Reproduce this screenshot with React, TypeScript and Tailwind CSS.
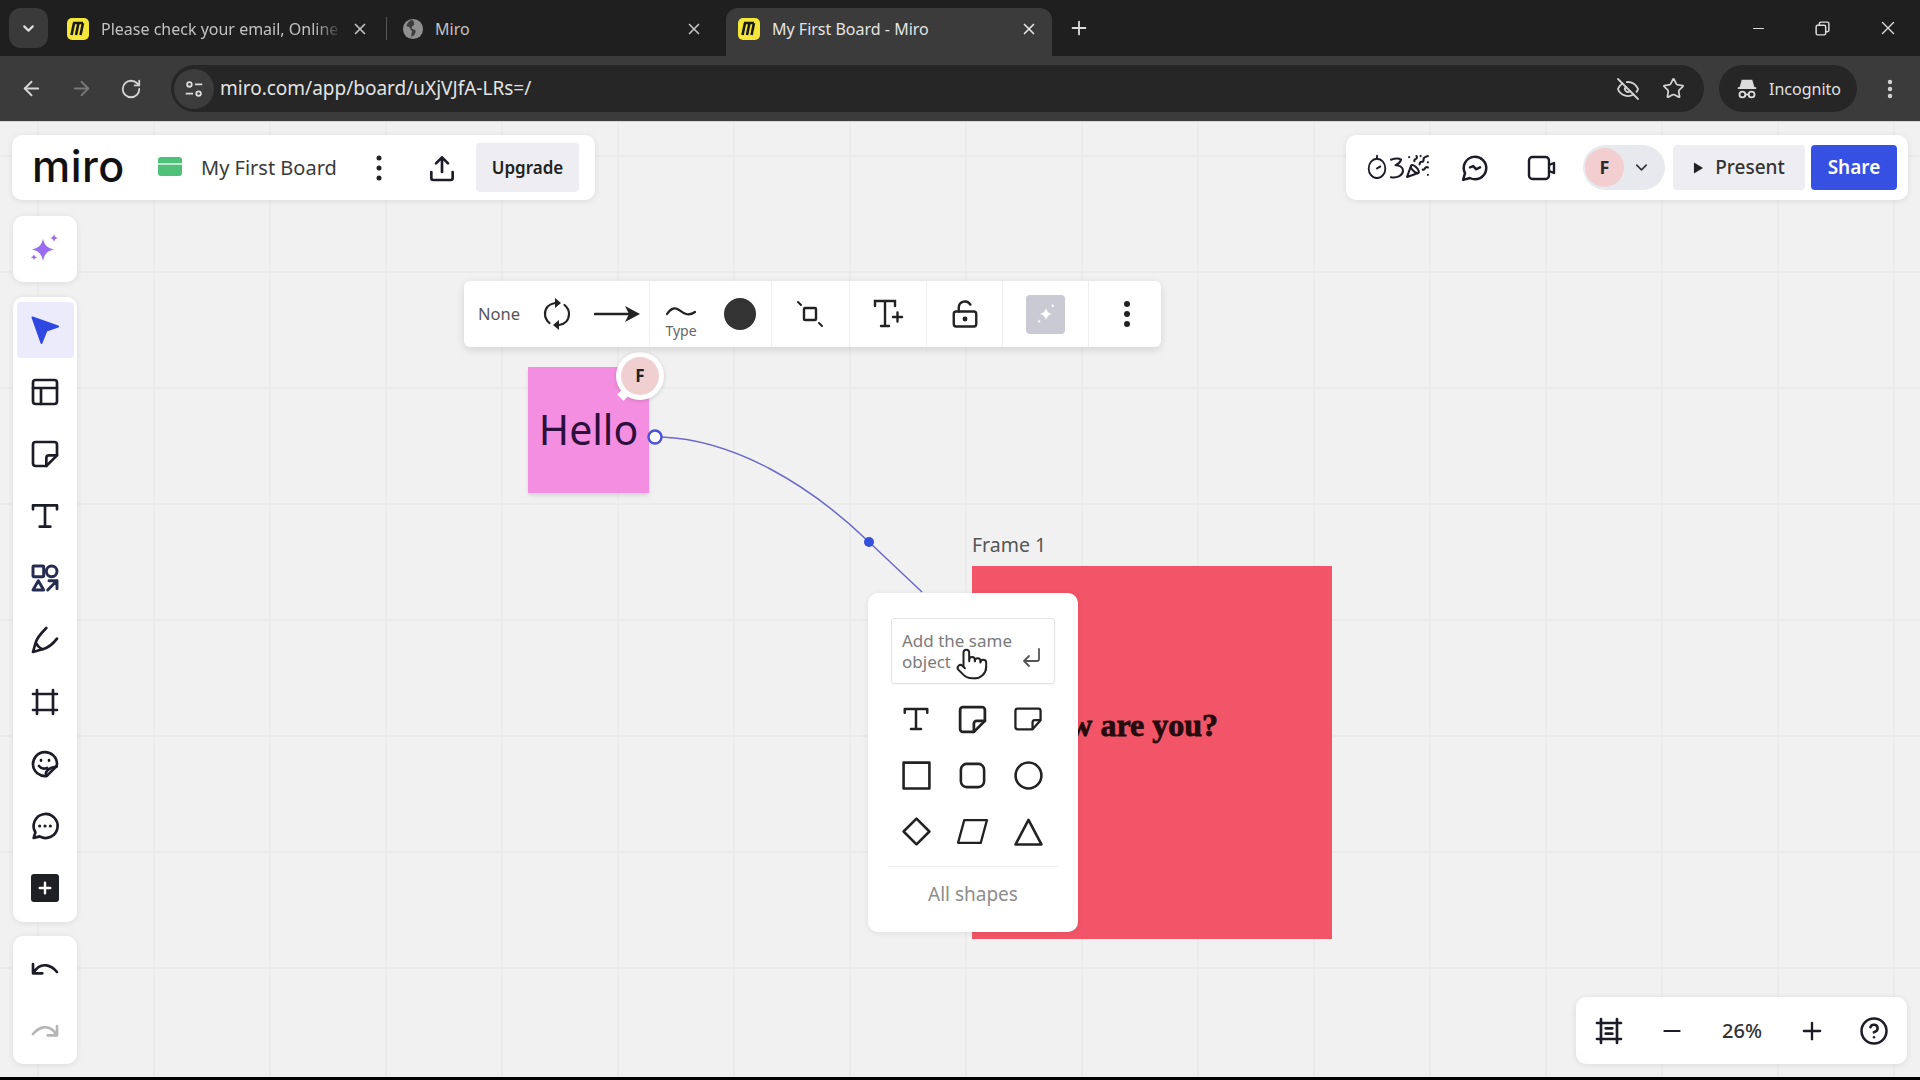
import React from "react";
import { ArrowLeft, ArrowRight, RotateCw, X, Plus, Minus, ChevronDown, Star, EyeOff, EllipsisVertical, PartyPopper, LockKeyholeOpen, CircleHelp, Pointer } from "lucide-react";

type IP = { size?: number; sw?: number; className?: string; children?: React.ReactNode };
const S = ({ size = 32, sw = 2, className = "", children }: IP) => (
  <svg viewBox="0 0 24 24" width={size} height={size} fill="none" stroke="currentColor" strokeWidth={sw} strokeLinecap="round" strokeLinejoin="round" className={className}>
    {children}
  </svg>
);

const Favicon = () => (
  <svg viewBox="0 0 24 24" width={24} height={24} className="shrink-0">
    <rect x="1" y="1" width="22" height="22" rx="5" fill="#f5e63a" />
    <path d="M8 6 L5.500 18 M12.500 6 L10 18 M17 6 L14.500 18 M7 6 L17 6" stroke="#1a1a1a" strokeWidth="2.600" fill="none" />
  </svg>
);

const Globe = () => (
  <svg viewBox="0 0 24 24" width={22} height={22} className="shrink-0">
    <circle cx="12" cy="12" r="11" fill="#8f8f8f" />
    <path d="M11 2c-3 1-6 4-6 7 2 0 3 1 4 2 0 2 1 3 2 3l-1 6c2 1 4-2 5-5 0-2-2-3-4-3-1-2 0-3 2-4 1-2 0-4-2-6z" fill="#3c3c3c" />
  </svg>
);

const Tab = ({ icon, title, w, pl, mr, active, fade }: { icon: React.ReactNode; title: string; w: string; pl: string; mr: string; active?: boolean; fade?: boolean }) => (
  <div className={`flex items-center h-[48px] pb-[7px] shrink-0 ${w} ${pl} ${active ? "bg-[#3b3b3b] rounded-t-[12px] text-[#e4e4e4]" : "text-[#c2c2c2]"}`}>
    {icon}
    <span className={`ml-[11px] flex-1 min-w-0 overflow-hidden whitespace-nowrap text-[16px] ${fade ? "[mask-image:linear-gradient(90deg,#000_88%,transparent)]" : ""}`}>{title}</span>
    <X size={18} strokeWidth={2.200} className={`shrink-0 ${mr} ml-2`} />
  </div>
);

const Chrome = () => (
  <div className="shrink-0">
    <div className="h-[56px] bg-[#1f1f1f] flex relative">
      <div className="ml-[9px] mt-[8px] w-[39px] h-[40px] rounded-[12px] bg-[#3a3a3a] flex items-center justify-center text-[#dedede] shrink-0">
        <ChevronDown size={17} strokeWidth={3} />
      </div>
      <div className="flex mt-[8px] ml-[8px]">
        <Tab icon={<Favicon />} title="Please check your email, Online" w="w-[330px]" pl="pl-[10px]" mr="mr-[17px]" fade />
        <div className="w-px h-[23px] bg-[#555] mt-[9px] shrink-0" />
        <Tab icon={<Globe />} title="Miro" w="w-[339px]" pl="pl-[15px]" mr="mr-[23px]" />
        <Tab icon={<Favicon />} title="My First Board - Miro" w="w-[326px]" pl="pl-[11px]" mr="mr-[14px]" active />
      </div>
      <Plus size={22} strokeWidth={2} className="ml-[16px] mt-[17px] text-[#dcdcdc]" />
      <div className="ml-auto flex items-center text-[#dcdcdc] h-[56px]">
        <Minus size={17} strokeWidth={1.600} className="mr-[47px]" />
        <svg viewBox="0 0 16 16" width={17} height={17} fill="none" stroke="currentColor" strokeWidth="1.400" className="mr-[46px]">
          <rect x="2" y="5" width="9" height="9" rx="1.500" />
          <path d="M5 5V3.500A1.500 1.500 0 0 1 6.500 2H12.500A1.500 1.500 0 0 1 14 3.500V9.500A1.500 1.500 0 0 1 12.500 11H11" />
        </svg>
        <X size={22} strokeWidth={1.500} className="mr-[21px]" />
      </div>
    </div>
    <div className="h-[66px] bg-[#3b3b3b] border-b border-[#d8d8d8] flex items-center text-[#d4d4d4]">
      <div className="ml-[6px] w-[50px] flex justify-center"><ArrowLeft size={23} strokeWidth={2} /></div>
      <div className="w-[50px] flex justify-center text-[#777]"><ArrowRight size={23} strokeWidth={2} /></div>
      <div className="w-[50px] flex justify-center"><RotateCw size={22} strokeWidth={2} /></div>
      <div className="ml-[15px] w-[1533px] h-[47px] rounded-full bg-[#262626] flex items-center">
        <div className="ml-[3px] w-[40px] h-[40px] rounded-full bg-[#3c3c3c] flex items-center justify-center">
          <svg viewBox="0 0 24 24" width={22} height={22} fill="none" stroke="#dcdcdc" strokeWidth="2">
            <circle cx="7" cy="7" r="2.500" /><path d="M13 7h8M3 17h8" /><circle cx="17" cy="17" r="2.500" />
          </svg>
        </div>
        <span className="ml-[6px] text-[19px] text-[#e3e3e3]">miro.com/app/board/uXjVJfA-LRs=/</span>
        <EyeOff size={24} strokeWidth={1.800} className="ml-auto" />
        <Star size={23} strokeWidth={1.800} className="ml-[22px] mr-[19px]" />
      </div>
      <div className="ml-[15px] w-[138px] h-[47px] rounded-full bg-[#262626] flex items-center">
        <svg viewBox="0 0 24 24" width={22} height={22} fill="none" stroke="#dcdcdc" strokeWidth="2" className="ml-[17px]">
          <path d="M7 3h10l2 7H5z" fill="#dcdcdc" /><path d="M2 11h20" />
          <circle cx="7" cy="18" r="3.200" /><circle cx="17" cy="18" r="3.200" /><path d="M10 18h4" />
        </svg>
        <span className="ml-[11px] text-[16px] text-[#e0e0e0]">Incognito</span>
      </div>
      <EllipsisVertical size={24} strokeWidth={2.400} className="ml-[21px]" />
    </div>
  </div>
);

const Sticky = () => (
  <><path d="M5 3h14a2 2 0 0 1 2 2v8l-8 8H5a2 2 0 0 1-2-2V5a2 2 0 0 1 2-2z" /><path d="M21 13h-6a2 2 0 0 0-2 2v6" /></>
);
const SerifT = () => <path d="M3 7V4h18v3M12 4v16M8 20h8" />;
const FrameLines = () => <path d="M6 3v18M18 3v18M3 6h18M3 18h18" />;

const SideBtn = ({ children, active, dim }: { children: React.ReactNode; active?: boolean; dim?: boolean }) => (
  <div className="h-[62px] w-full flex items-center justify-center">
    <div className={`w-[57px] h-[56px] rounded-[4px] flex items-center justify-center ${active ? "bg-[#ecebfb]" : ""} ${dim ? "text-[#b5b5b5]" : "text-[#1c1c28]"}`}>{children}</div>
  </div>
);

const panel = "bg-white rounded-[10px] shadow-[0_1px_6px_rgba(0,0,0,0.09)]";

const Sidebar = () => (
  <div className="absolute left-[13px] top-[94px] w-[64px] flex flex-col">
    <div className={`${panel} h-[66px] flex items-center justify-center`}>
      <svg viewBox="0 0 32 32" width={32} height={32} fill="#9a6cf0">
        <path d="M14 6c1.500 6 4 9 11 10.500C18 18 15.500 21 14 28c-1.500-7-4-10-11-11.500C10 15 12.500 12 14 6z" />
        <path d="M25 1c.5 2.500 1.500 3.500 4 4-2.500.5-3.500 1.500-4 4-.5-2.500-1.500-3.500-4-4 2.500-.5 3.500-1.500 4-4zM5 21c.4 2 1.200 2.800 3.200 3.200C6.200 24.600 5.400 25.400 5 27.400c-.4-2-1.200-2.800-3.200-3.200C3.800 23.800 4.600 23 5 21z" />
      </svg>
    </div>
    <div className={`${panel} mt-[15px] h-[625px] pt-[2px] flex flex-col`}>
      <SideBtn active>
        <svg viewBox="0 0 28 28" width={28} height={28} className="-ml-[1px]"><path d="M1.500 1.500 L27 10.500 L15.500 14.500 L10.500 27 Z" fill="#3048e2" stroke="#3048e2" strokeWidth="2" strokeLinejoin="round" /></svg>
      </SideBtn>
      <SideBtn><S><rect x="3" y="3" width="18" height="18" rx="2" /><path d="M3 9h18M9 9v12" /></S></SideBtn>
      <SideBtn><S><Sticky /></S></SideBtn>
      <SideBtn><S><SerifT /></S></SideBtn>
      <SideBtn><S className="text-[#262b52]" sw={2.200}><rect x="3" y="3" width="8" height="8" rx="0.500" /><circle cx="17" cy="7" r="4" /><path d="M7 14l4 7H3zM14 21l7-7M15 14h6v6" /></S></SideBtn>
      <SideBtn><S><path d="M3 21l2-7c1-4 5-8 8-11M3 21l7-2c4-1 8-4 11-8M5 14c1 2 3 4 5 5" /></S></SideBtn>
      <SideBtn><S><FrameLines /></S></SideBtn>
      <SideBtn><S><path d="M13 21a9 9 0 1 1 8-9c0 1-.5 1.800-1.200 2.500l-5.300 5.300c-.5.500-1 1.200-1.500 1.200z" /><path d="M9 9v.5M15 9v.5M7.500 13.500c1.500 2 3.500 2.500 6 1.500M13 21c-1-3 .5-6 7.800-7" /></S></SideBtn>
      <SideBtn><S><path d="M3.500 21l1.300-4.300A9 9 0 1 1 8 19.800z" /><path d="M8 12h.01M12 12h.01M16 12h.01" strokeWidth="2.400" /></S></SideBtn>
      <SideBtn>
        <div className="w-[28px] h-[28px] rounded-[3px] bg-[#1f2026] flex items-center justify-center text-white"><Plus size={18} strokeWidth={3.200} /></div>
      </SideBtn>
    </div>
    <div className={`${panel} mt-[14px] h-[128px] pt-[1px] flex flex-col`}>
      <SideBtn><S><path d="M3 9v7h7M3.500 15.500C6 11 9 9.500 13 10c3 .4 6 2.500 8 5" /></S></SideBtn>
      <SideBtn dim><S><path d="M21 9v7h-7M20.500 15.500C18 11 15 9.500 11 10c-3 .4-6 2.500-8 5" /></S></SideBtn>
    </div>
  </div>
);

const Header = () => (
  <div className={`${panel} absolute left-[12px] top-[13px] w-[583px] h-[65px] flex items-center`}>
    <span className="ml-[20px] w-[126px] text-[43px] leading-none font-medium tracking-[0.5px] text-[#111] font-['Inter',sans-serif] -mt-[3px]">miro</span>
    <div className="w-[24px] h-[19px] rounded-[3px] bg-[#4fc07a] flex items-center -mt-[2px]"><div className="w-full h-[2px] bg-[#bfeacd] mb-[5px]" /></div>
    <span className="ml-[19px] w-[155px] text-[20px] text-[#3a3a3a]">My First Board</span>
    <svg viewBox="0 0 6 28" width={6} height={28} className="ml-[20px]" fill="#222"><circle cx="3" cy="4" r="2.500" /><circle cx="3" cy="14" r="2.500" /><circle cx="3" cy="24" r="2.500" /></svg>
    <S size={32} className="ml-[44px] text-[#1c1c28]"><path d="M12 15V4M7.500 8.500 12 4l4.500 4.500M4 15v4.500A1.500 1.500 0 0 0 5.500 21h13a1.500 1.500 0 0 0 1.500-1.500V15" /></S>
    <div className="ml-[18px] w-[103px] h-[49px] rounded-[4px] bg-[#eeeef2] flex items-center justify-center text-[17px] font-semibold text-[#222]">Upgrade</div>
  </div>
);

const RightPanel = () => (
  <div className={`${panel} absolute left-[1346px] top-[13px] w-[562px] h-[65px] flex items-center text-[#1c1c28]`}>
    <svg viewBox="0 0 24 26" width={20} height={25} preserveAspectRatio="none" className="ml-[21px] -mt-[2px]" fill="none" stroke="currentColor" strokeWidth="2.200" strokeLinecap="round">
      <circle cx="12" cy="15" r="10" /><path d="M12 15l4-2M12 2v3" />
    </svg>
    <svg viewBox="0 0 18 26" width={17} height={24} fill="none" stroke="currentColor" strokeWidth="2.200" strokeLinecap="round" strokeLinejoin="round" className="ml-[1px]">
      <path d="M3 4c3-1 8-2 11 0-1 3-3 5-6 6 4 0 8 2 8 6 0 5-6 8-13 7" />
    </svg>
    <PartyPopper size={25} strokeWidth={2} className="-mt-[3px]" />
    <S size={30} className="ml-[30px]"><path d="M7.900 20A9 9 0 1 0 4 16.100L2.500 21.500Z" /><path d="M8 11.500l2.500-1 2.500 2.500 3-1.500" /></S>
    <svg viewBox="0 0 30 28" width={30} height={28} fill="none" stroke="currentColor" strokeWidth="2.400" strokeLinejoin="round" className="ml-[37px]">
      <rect x="2" y="3" width="20" height="22" rx="3.500" /><path d="M22 11l5-2v10l-5-2" />
    </svg>
    <div className="ml-[26px] w-[82px] h-[45px] rounded-full bg-[#e8e9ee] flex items-center">
      <div className="w-[39px] h-[39px] ml-[2px] rounded-full bg-[#f3ced1] flex items-center justify-center text-[18px] font-bold text-[#2b2b2b]">F</div>
      <ChevronDown size={19} strokeWidth={2} className="ml-[8px] text-[#333]" />
    </div>
    <div className="ml-[8px] w-[132px] h-[45px] rounded-[4px] bg-[#eeeef2] flex items-center justify-center text-[#333]">
      <svg viewBox="0 0 12 14" width={11} height={14} fill="#222"><path d="M1 1l10 6-10 6z" /></svg>
      <span className="ml-[11px] text-[19px] font-medium">Present</span>
    </div>
    <div className="ml-[6px] w-[86px] h-[45px] rounded-[4px] bg-[#3650e4] flex items-center justify-center text-white text-[19px] font-semibold">Share</div>
  </div>
);

const CtxCell = ({ w, first, className = "justify-center", children }: { w: string; first?: boolean; className?: string; children: React.ReactNode }) => (
  <div className={`h-full flex items-center shrink-0 ${w} ${className} ${first ? "" : "border-l border-[#efefef]"}`}>{children}</div>
);

const ContextBar = () => (
  <div className="absolute left-[464px] top-[159px] w-[697px] h-[66px] bg-white rounded-[6px] shadow-[0_3px_8px_rgba(0,0,0,0.12)] flex text-[#222]">
    <CtxCell w="w-[185px]" first className="justify-start">
      <span className="ml-[14px] w-[43px] text-[16.500px] text-[#555] whitespace-nowrap">None</span>
      <svg viewBox="0 0 28 34" width={28} height={34} fill="none" stroke="#222" strokeWidth="2.200" strokeLinecap="round" className="ml-[22px]">
        <path d="M12 6C6 7 2 11 2 17c0 4 2 7 4.500 9M16 28c6-1 10-5 10-11 0-4-2-7-4.500-9" />
        <path d="M12 1l6 5-6 5zM16 23l-6 5 6 5z" fill="#222" stroke="none" />
      </svg>
      <svg viewBox="0 0 46 20" width={46} height={20} fill="#222" className="ml-[23px]"><path d="M1 10H38" stroke="#222" strokeWidth="2.600" strokeLinecap="round" /><path d="M31 2 L46 10 L31 18 L35 10z" /></svg>
    </CtxCell>
    <CtxCell w="w-[122px]" className="justify-start">
      <div className="flex flex-col items-center self-start ml-[15px] mt-[25px] w-[32px]">
        <svg viewBox="0 0 30 12" width={30} height={12} fill="none" stroke="#222" strokeWidth="2.200" strokeLinecap="round"><path d="M1 8c4-6 8-7 12-4s9 7 16 2" /></svg>
        <span className="text-[14px] leading-[17px] mt-[4px] text-[#666]">Type</span>
      </div>
      <div className="ml-[27px] w-[32px] h-[32px] rounded-full bg-[#333]" />
    </CtxCell>
    <CtxCell w="w-[78px]">
      <svg viewBox="0 0 28 28" width={28} height={28} fill="none" stroke="#222" strokeWidth="2.400" strokeLinecap="round" className="-ml-[1px]"><rect x="8" y="8" width="12" height="12" rx="1" /><path d="M2 2l3 3M23 23l3 3" strokeWidth="2" /></svg>
    </CtxCell>
    <CtxCell w="w-[77px]">
      <svg viewBox="0 0 32 32" width={32} height={32} fill="none" stroke="#222" strokeWidth="2.400" strokeLinecap="round"><path d="M3 8V3h20v5M13 3v25M9 28h8M21 19h9M25.500 14.500v9" /></svg>
    </CtxCell>
    <CtxCell w="w-[76px]"><LockKeyholeOpen size={30} strokeWidth={1.900} /></CtxCell>
    <CtxCell w="w-[86px]">
      <div className="w-[39px] h-[39px] rounded-[4px] bg-[#c9cad4] flex items-center justify-center">
        <svg viewBox="0 0 28 28" width={24} height={24} fill="#fff"><path d="M14 7c1 4 3 6 7 7-4 1-6 3-7 7-1-4-3-6-7-7 4-1 6-3 7-7zM22 2c.3 1.500 1 2.200 2.500 2.500C23 4.800 22.300 5.500 22 7c-.3-1.500-1-2.200-2.500-2.500C21 4.200 21.700 3.500 22 2zM6 20c.3 1.500 1 2.200 2.500 2.500C7 22.800 6.300 23.500 6 25c-.3-1.500-1-2.200-2.500-2.500C5 22.200 5.700 21.500 6 20z" /></svg>
      </div>
    </CtxCell>
    <CtxCell w="w-[73px]">
      <svg viewBox="0 0 8 30" width={8} height={30} fill="#222" className="ml-[3px]"><circle cx="4" cy="5" r="3" /><circle cx="4" cy="15" r="3" /><circle cx="4" cy="25" r="3" /></svg>
    </CtxCell>
  </div>
);

const Board = () => (
  <>
    <div className="absolute left-[528px] top-[245px] w-[121px] h-[126px] bg-[#f48ee0] shadow-[0_3px_4px_rgba(0,0,0,0.10)] flex items-center justify-center text-[41px] text-[#2c0f3c] pb-[2px] leading-none">Hello</div>
    <div className="absolute left-[616px] top-[230px] w-[48px] h-[48px] rounded-full bg-white shadow-[0_1px_4px_rgba(0,0,0,0.15)] flex items-center justify-center">
      <div className="w-[38px] h-[38px] rounded-full bg-[#efcfd0] flex items-center justify-center text-[17px] font-bold text-[#222]">F</div>
      <div className="absolute left-[3px] bottom-[1px] w-[9px] h-[9px] bg-white rotate-45" />
    </div>

    <svg className="absolute left-[640px] top-[298px]" width={300} height={190} viewBox="0 0 300 190" fill="none">
      <path d="M22 17 C95 20 170 65 229 122 L282 172" stroke="#6c69c9" strokeWidth="1.500" />
      <circle cx="15" cy="17" r="6.500" fill="#fff" stroke="#4a50d8" strokeWidth="2.400" />
      <circle cx="229" cy="122" r="5" fill="#3350dc" />
    </svg>

    <span className="absolute left-[972px] top-[411px] text-[19.500px] leading-[24px] text-[#555]">Frame 1</span>
    <div className="absolute left-[972px] top-[444px] w-[360px] h-[373px] bg-[#f25567]" />
    <span className="absolute left-[1018px] top-[584px] w-[200px] text-right whitespace-nowrap text-[32px] leading-[38px] font-bold text-[#240b0e] [-webkit-text-stroke:0.8px_#240b0e] font-['Liberation_Serif',serif]">How are you?</span>

    <div className="absolute left-[868px] top-[471px] w-[210px] h-[339px] bg-white rounded-[10px] shadow-[0_1px_6px_rgba(0,0,0,0.08)] px-[20px] pt-[25px] text-[#222]">
      <div className="relative ml-[3px] w-[164px] h-[66px] rounded-[3px] border border-[#e4e4e4] shadow-[0_1px_2px_rgba(0,0,0,0.05)] pl-[10px] pt-[11px] text-[17px] leading-[21px] text-[#7b7b7b]">
        Add the same<br />object
        <svg viewBox="0 0 24 24" width={24} height={24} fill="none" stroke="#555" strokeWidth="1.800" strokeLinecap="round" strokeLinejoin="round" className="absolute right-[11px] top-[26px]"><path d="M20 4v10a2 2 0 0 1-2 2H5M10 11l-5 5 5 5" /></svg>
        <Pointer size={34} strokeWidth={1.400} fill="#fff" stroke="#222" className="absolute left-[63px] top-[28px]" />
      </div>
      <div className="grid grid-cols-[56px_56px_56px] auto-rows-[56px] mt-[7px] place-items-center">
        <S size={30}><SerifT /></S>
        <S size={33}><Sticky /></S>
        <svg viewBox="0 0 28 24" width={32} height={28} fill="none" stroke="currentColor" strokeWidth="2" strokeLinejoin="round"><path d="M5 3h18a2 2 0 0 1 2 2v8l-7 8H5a2 2 0 0 1-2-2V5a2 2 0 0 1 2-2z" /><path d="M25 13h-5a2 2 0 0 0-2 2v6" /></svg>
        <S size={31}><rect x="2" y="2" width="20" height="20" /></S>
        <S size={31}><rect x="3" y="3" width="18" height="18" rx="4.500" /></S>
        <S size={31}><circle cx="12" cy="12" r="10" /></S>
        <S size={31}><path d="M12 2l10 10-10 10L2 12z" /></S>
        <svg viewBox="0 0 32 28" width={33} height={29} fill="none" stroke="currentColor" strokeWidth="2.200" strokeLinejoin="round"><path d="M8 3h22l-6 22H2z" /></svg>
        <S size={31}><path d="M12 3l10 19H2z" /></S>
      </div>
      <div className="mt-[7px] border-t border-[#eeeeee] h-[56px] flex items-center justify-center text-[19px] text-[#8d8d8d]">All shapes</div>
    </div>
  </>
);

const Zoom = () => (
  <div className={`${panel} absolute left-[1576px] top-[875px] w-[331px] h-[67px] flex items-center text-[#1c1c28]`}>
    <S size={32} className="ml-[17px]"><FrameLines /><path d="M9.500 10h5M9.500 14h5" /></S>
    <Minus size={26} strokeWidth={2} className="ml-[34px]" />
    <span className="ml-[13px] w-[88px] text-center text-[20px] font-medium text-[#333]">26%</span>
    <Plus size={28} strokeWidth={2} className="ml-[12px]" />
    <CircleHelp size={30} strokeWidth={2} className="ml-[33px]" />
  </div>
);

export default function App() {
  return (
    <div className="w-screen h-screen overflow-hidden flex flex-col bg-black font-['Noto_Sans','Liberation_Sans',sans-serif]">
      <Chrome />
      <div className="relative flex-1 bg-[#f1f1f1] bg-[linear-gradient(#ebebeb_2px,transparent_2px),linear-gradient(90deg,#ebebeb_2px,transparent_2px)] bg-[size:116px_116px] bg-[position:37px_33px]">
        <Board />
        <ContextBar />
        <Header />
        <RightPanel />
        <Sidebar />
        <Zoom />
      </div>
      <div className="h-[3px] bg-black shrink-0" />
    </div>
  );
}
